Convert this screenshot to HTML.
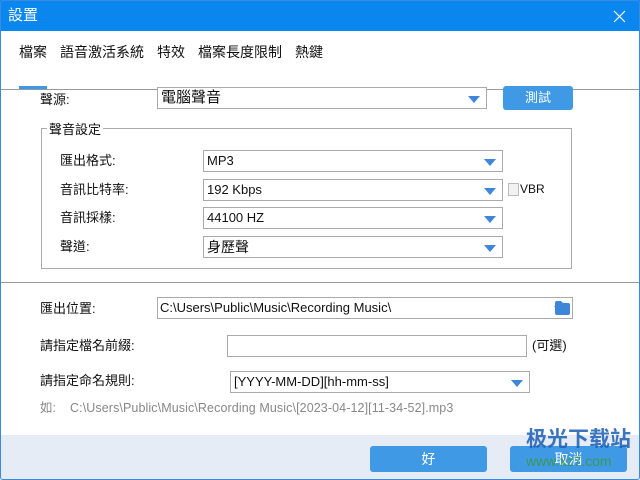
<!DOCTYPE html><html><head><meta charset="utf-8"><style>
*{margin:0;padding:0;box-sizing:border-box}
body{width:640px;height:480px;overflow:hidden;background:#fff;font-family:"Liberation Sans","Noto Sans CJK TC",sans-serif;font-size:13px;color:#111;position:relative}
.a{position:absolute;line-height:18px}
.title{left:0;top:0;width:640px;height:31px;background:#0a86ef;color:#fff;font-size:15px}
.win{left:0;top:0;width:640px;height:480px;border:1px solid #3a8ae0;border-radius:3px;pointer-events:none}
.dd{border:1px solid #aaa;background:#fff;padding-left:3px;line-height:20px;font-size:13px}
.dd:after{content:"";position:absolute;right:6px;top:8px;border-left:6px solid transparent;border-right:6px solid transparent;border-top:7px solid #3d86d8}
.btn{background:#3f99e4;color:#fff;text-align:center;border-radius:3px}
</style></head><body>
<div class="a title"><span class="a" style="left:8px;top:7px">設置</span>
<svg class="a" style="left:613px;top:10px" width="13" height="13"><path d="M1 1L12 12M12 1L1 12" stroke="#fff" stroke-width="1.2"/></svg></div>
<div class="a" style="top:43px;left:19px;font-size:14px">檔案</div>
<div class="a" style="top:43px;left:60px;font-size:14px">語音激活系統</div>
<div class="a" style="top:43px;left:157px;font-size:14px">特效</div>
<div class="a" style="top:43px;left:198px;font-size:14px">檔案長度限制</div>
<div class="a" style="top:43px;left:295px;font-size:14px">熱鍵</div>
<div class="a" style="left:19px;top:86px;width:28px;height:3px;background:#3d99e6"></div>
<div class="a" style="left:0;top:89px;width:640px;height:1px;background:#999"></div>
<div class="a" style="left:40px;top:91px">聲源:</div>
<div class="a dd" style="left:157px;top:87px;width:330px;height:22px;font-size:15px;line-height:20px">電腦聲音</div>
<div class="a btn" style="left:503px;top:86px;width:70px;height:24px;line-height:24px">測試</div>
<div class="a" style="left:41px;top:128px;width:531px;height:141px;border:1px solid #aaa"></div>
<div class="a" style="left:47px;top:121px;background:#fff;padding:0 2px">聲音設定</div>
<div class="a" style="left:60px;top:152px">匯出格式:</div>
<div class="a dd" style="left:203px;top:150px;width:300px;height:22px">MP3</div>
<div class="a" style="left:60px;top:181px">音訊比特率:</div>
<div class="a dd" style="left:203px;top:179px;width:300px;height:22px">192 Kbps</div>
<div class="a" style="left:508px;top:183px;width:11px;height:13px;border:1px solid #bbb;background:#f2f2f2"></div>
<div class="a" style="left:520px;top:180px;font-size:12px">VBR</div>
<div class="a" style="left:60px;top:209px">音訊採樣:</div>
<div class="a dd" style="left:203px;top:207px;width:300px;height:22px">44100 HZ</div>
<div class="a" style="left:60px;top:238px">聲道:</div>
<div class="a dd" style="left:203px;top:236px;width:300px;height:22px;font-size:14px">身歷聲</div>
<div class="a" style="left:0;top:282px;width:640px;height:1px;background:#999"></div>
<div class="a" style="left:40px;top:300px">匯出位置:</div>
<div class="a dd" style="left:157px;top:297px;width:416px;height:22px;padding-left:2px">C:\Users\Public\Music\Recording Music\</div>
<svg class="a" style="left:555px;top:301px" width="15" height="14"><path d="M0 2Q0 0 2 0H6L8 2H13Q15 2 15 4V12Q15 14 13 14H2Q0 14 0 12Z" fill="#3d86d8"/></svg>
<div class="a" style="left:40px;top:337px">請指定檔名前綴:</div>
<div class="a" style="left:227px;top:335px;width:300px;height:22px;border:1px solid #aaa"></div>
<div class="a" style="left:532px;top:337px">(可選)</div>
<div class="a" style="left:40px;top:372px">請指定命名規則:</div>
<div class="a dd" style="left:230px;top:371px;width:300px;height:22px">[YYYY-MM-DD][hh-mm-ss]</div>
<div class="a" style="left:40px;top:399px;color:#888;font-size:12.5px">如:</div>
<div class="a" style="left:70px;top:399px;color:#888;font-size:12.5px;letter-spacing:0.1px">C:\Users\Public\Music\Recording Music\[2023-04-12][11-34-52].mp3</div>
<div class="a" style="left:0;top:435px;width:640px;height:45px;background:#e6ecf6"></div>
<div class="a btn" style="left:370px;top:446px;width:117px;height:26px;line-height:26px;font-size:14px">好</div>
<div class="a btn" style="left:510px;top:446px;width:117px;height:26px;line-height:26px;font-size:14px">取消</div>
<div class="a" style="left:526px;top:428px;font-size:21px;line-height:24px;font-weight:bold;color:#1b5fb5;opacity:.85">极光下载站</div>
<div class="a" style="left:526px;top:452px;font-size:14px;color:#3a9a3a;opacity:.85">www.xz7.com</div>
<div class="a win"></div>
</body></html>
